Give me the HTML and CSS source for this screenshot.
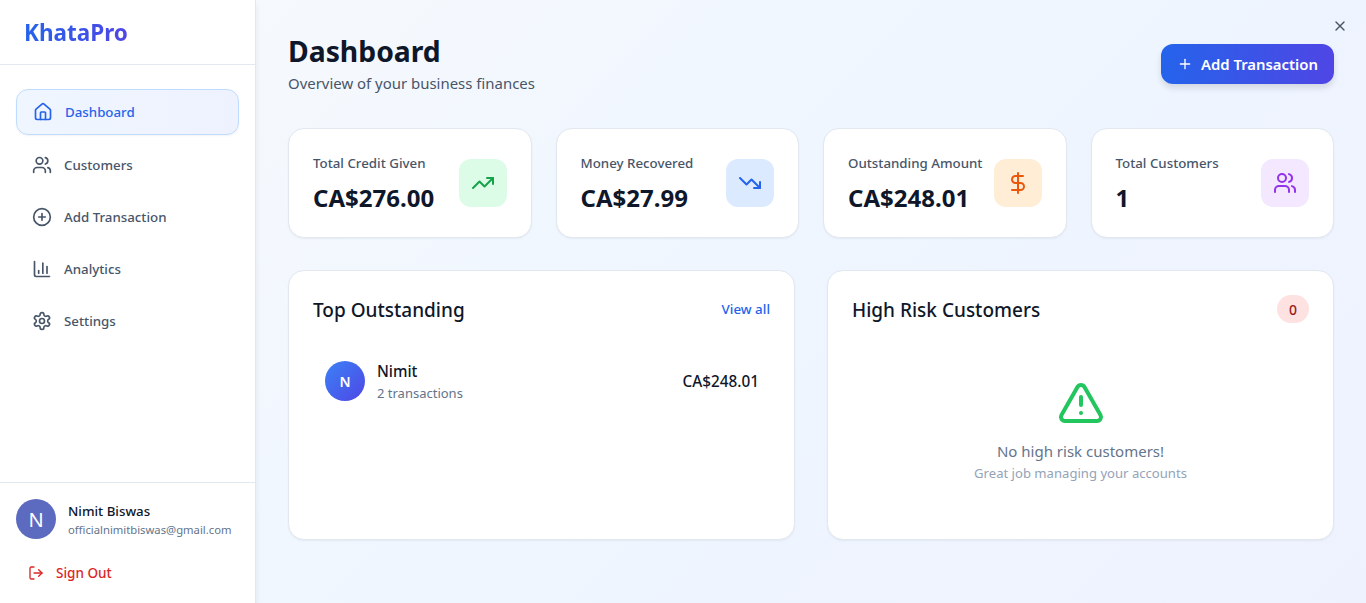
FILE: index.html
```html
<!DOCTYPE html>
<html lang="en">
<head>
  <meta charset="UTF-8">
  <meta name="viewport" content="width=device-width, initial-scale=1.0">
  <title>KhataPro</title>
  <link rel="stylesheet" href="styles.css">
</head>
<body>
  <aside class="sidebar">
    <div class="logo"><span class="logo-text">KhataPro</span></div>

    <nav class="nav">
      <a class="nav-item active">
        <svg class="icon" viewBox="0 0 24 24"><path d="M15 21v-8a1 1 0 0 0-1-1h-4a1 1 0 0 0-1 1v8"/><path d="M3 10a2 2 0 0 1 .709-1.528l7-5.999a2 2 0 0 1 2.582 0l7 5.999A2 2 0 0 1 21 10v9a2 2 0 0 1-2 2H5a2 2 0 0 1-2-2z"/></svg>
        <span>Dashboard</span>
      </a>
      <a class="nav-item">
        <svg class="icon" viewBox="0 0 24 24"><path d="M16 21v-2a4 4 0 0 0-4-4H6a4 4 0 0 0-4 4v2"/><circle cx="9" cy="7" r="4"/><path d="M22 21v-2a4 4 0 0 0-3-3.87"/><path d="M16 3.13a4 4 0 0 1 0 7.75"/></svg>
        <span>Customers</span>
      </a>
      <a class="nav-item">
        <svg class="icon" viewBox="0 0 24 24"><circle cx="12" cy="12" r="10"/><path d="M8 12h8"/><path d="M12 8v8"/></svg>
        <span>Add Transaction</span>
      </a>
      <a class="nav-item">
        <svg class="icon" viewBox="0 0 24 24"><path d="M3 3v16a2 2 0 0 0 2 2h16"/><path d="M18 17V9"/><path d="M13 17V5"/><path d="M8 17v-3"/></svg>
        <span>Analytics</span>
      </a>
      <a class="nav-item">
        <svg class="icon" viewBox="0 0 24 24"><path d="M12.22 2h-.44a2 2 0 0 0-2 2v.18a2 2 0 0 1-1 1.73l-.43.25a2 2 0 0 1-2 0l-.15-.08a2 2 0 0 0-2.73.73l-.22.38a2 2 0 0 0 .73 2.73l.15.1a2 2 0 0 1 1 1.72v.51a2 2 0 0 1-1 1.74l-.15.09a2 2 0 0 0-.73 2.73l.22.38a2 2 0 0 0 2.73.73l.15-.08a2 2 0 0 1 2 0l.43.25a2 2 0 0 1 1 1.73V20a2 2 0 0 0 2 2h.44a2 2 0 0 0 2-2v-.18a2 2 0 0 1 1-1.73l.43-.25a2 2 0 0 1 2 0l.15.08a2 2 0 0 0 2.73-.73l.22-.39a2 2 0 0 0-.73-2.73l-.15-.08a2 2 0 0 1-1-1.74v-.5a2 2 0 0 1 1-1.74l.15-.09a2 2 0 0 0 .73-2.73l-.22-.38a2 2 0 0 0-2.73-.73l-.15.08a2 2 0 0 1-2 0l-.43-.25a2 2 0 0 1-1-1.73V4a2 2 0 0 0-2-2z"/><circle cx="12" cy="12" r="3"/></svg>
        <span>Settings</span>
      </a>
    </nav>

    <div class="user-box">
      <div class="user">
        <div class="user-avatar">N</div>
        <div>
          <div class="user-name">Nimit Biswas</div>
          <div class="user-email">officialnimitbiswas@gmail.com</div>
        </div>
      </div>
      <a class="sign-out">
        <svg class="icon-sm" viewBox="0 0 24 24"><path d="M9 21H5a2 2 0 0 1-2-2V5a2 2 0 0 1 2-2h4"/><path d="m16 17 5-5-5-5"/><path d="M21 12H9"/></svg>
        Sign Out
      </a>
    </div>
  </aside>

  <main class="main">
    <svg class="close" viewBox="0 0 24 24"><path d="M18 6 6 18"/><path d="m6 6 12 12"/></svg>

    <header class="page-head">
      <div class="page-title">
        <h1>Dashboard</h1>
        <p>Overview of your business finances</p>
      </div>
      <button class="add-btn">
        <svg class="icon-sm" viewBox="0 0 24 24"><path d="M5 12h14"/><path d="M12 5v14"/></svg>
        Add Transaction
      </button>
    </header>

    <section class="stats">
      <div class="stat">
        <div>
          <div class="stat-label">Total Credit Given</div>
          <div class="stat-value">CA$276.00</div>
        </div>
        <div class="stat-icon green">
          <svg class="icon" viewBox="0 0 24 24"><path d="M22 7 13.5 15.5 8.5 10.5 2 17"/><path d="M16 7h6v6"/></svg>
        </div>
      </div>
      <div class="stat">
        <div>
          <div class="stat-label">Money Recovered</div>
          <div class="stat-value">CA$27.99</div>
        </div>
        <div class="stat-icon blue">
          <svg class="icon" viewBox="0 0 24 24"><path d="M22 17 13.5 8.5 8.5 13.5 2 7"/><path d="M16 17h6v-6"/></svg>
        </div>
      </div>
      <div class="stat">
        <div>
          <div class="stat-label">Outstanding Amount</div>
          <div class="stat-value">CA$248.01</div>
        </div>
        <div class="stat-icon orange">
          <svg class="icon" viewBox="0 0 24 24"><path d="M12 2v20"/><path d="M17 5H9.500a3.500 3.500 0 0 0 0 7h5a3.500 3.500 0 0 1 0 7H6"/></svg>
        </div>
      </div>
      <div class="stat">
        <div>
          <div class="stat-label">Total Customers</div>
          <div class="stat-value">1</div>
        </div>
        <div class="stat-icon purple">
          <svg class="icon" viewBox="0 0 24 24"><path d="M16 21v-2a4 4 0 0 0-4-4H6a4 4 0 0 0-4 4v2"/><circle cx="9" cy="7" r="4"/><path d="M22 21v-2a4 4 0 0 0-3-3.870"/><path d="M16 3.130a4 4 0 0 1 0 7.750"/></svg>
        </div>
      </div>
    </section>

    <section class="panels">
      <div class="panel">
        <div class="panel-head">
          <h2>Top Outstanding</h2>
          <a class="view-all">View all</a>
        </div>
        <div class="customer-row">
          <div class="customer-avatar">N</div>
          <div class="customer-info">
            <div class="customer-name">Nimit</div>
            <div class="customer-sub">2 transactions</div>
          </div>
          <div class="customer-amount">CA$248.01</div>
        </div>
      </div>

      <div class="panel">
        <div class="panel-head">
          <h2>High Risk Customers</h2>
          <span class="count-badge">0</span>
        </div>
        <div class="empty">
          <svg class="empty-icon" viewBox="0 0 24 24"><path d="m21.730 18-8-14a2 2 0 0 0-3.480 0l-8 14A2 2 0 0 0 4 21h16a2 2 0 0 0 1.730-3"/><path d="M12 9v4"/><path d="M12 17h.01"/></svg>
          <div class="empty-title">No high risk customers!</div>
          <div class="empty-sub">Great job managing your accounts</div>
        </div>
      </div>
    </section>
  </main>
</body>
</html>
```

FILE: styles.css
```css
* {
  box-sizing: border-box;
}
body {
  font-family: "Noto Sans", sans-serif;
  margin: 0;
  height: 603px;
  overflow: hidden;
  display: flex;
  color: #0f172a;
  background: linear-gradient(135deg, #f8fafc, #eff6ff 50%, #eef2ff);
}
svg {
  fill: none;
  stroke: currentColor;
  stroke-width: 2;
  stroke-linecap: round;
  stroke-linejoin: round;
}
.icon {
  width: 24px;
  height: 24px;
  flex-shrink: 0;
}
.icon-sm {
  width: 16px;
  height: 16px;
  flex-shrink: 0;
}

/* sidebar */
.sidebar {
  width: 256px;
  flex-shrink: 0;
  background: #fff;
  border-right: 1px solid #e2e8f0;
  box-shadow: 0 4px 6px rgba(0, 0, 0, 0.08);
  display: flex;
  flex-direction: column;
}
.logo {
  height: 65px;
  padding: 17px 24px 0;
  border-bottom: 1px solid #e2e8f0;
}
.logo-text {
  font-size: 22.5px;
  line-height: 32px;
  font-weight: 700;
  background: linear-gradient(90deg, #2563eb, #4f46e5);
  -webkit-background-clip: text;
  background-clip: text;
  color: transparent;
}
.nav {
  flex: 1;
  padding: 24px 16px;
  display: flex;
  flex-direction: column;
  gap: 8px;
}
.nav-item {
  display: flex;
  align-items: center;
  gap: 12px;
  height: 44px;
  padding: 0 16px;
  border-radius: 12px;
  font-size: 13.3px;
  font-weight: 500;
  color: #475569;
}
.nav-item.active {
  height: 46px;
  color: #2563eb;
  background: linear-gradient(90deg, #eff6ff, #eef2ff);
  border: 1px solid #bfdbfe;
  box-shadow: 0 1px 2px rgba(0, 0, 0, 0.05);
}
.nav-item .icon {
  width: 20px;
  height: 20px;
}
.user-box {
  border-top: 1px solid #e2e8f0;
  padding: 16px;
  height: 121px;
}
.user {
  display: flex;
  align-items: center;
  gap: 12px;
}
.user-avatar {
  width: 40px;
  height: 40px;
  flex-shrink: 0;
  border-radius: 50%;
  background: #5c6bc0;
  color: #fff;
  font-size: 20px;
  display: flex;
  align-items: center;
  justify-content: center;
}
.user-name {
  font-size: 13.3px;
  line-height: 20px;
  font-weight: 500;
}
.user-email {
  font-size: 11.25px;
  line-height: 16px;
  margin-top: 1px;
  color: #64748b;
}
.sign-out {
  display: flex;
  align-items: center;
  gap: 12px;
  margin-top: 17px;
  padding: 8px 12px;
  font-size: 13.5px;
  font-weight: 500;
  color: #dc2626;
}

/* main */
.main {
  flex: 1;
  position: relative;
  padding: 32px;
}
.close {
  position: absolute;
  top: 18px;
  right: 18px;
  width: 16px;
  height: 16px;
  color: #4b5563;
}
.page-head {
  display: flex;
  justify-content: space-between;
  align-items: flex-start;
  height: 64px;
  margin-bottom: 32px;
}
.page-title {
  padding-top: 1px;
}
h1 {
  margin: 0;
  font-size: 28.3px;
  line-height: 36px;
  font-weight: 700;
}
.page-title p {
  margin: 0;
  font-size: 14.95px;
  line-height: 28px;
  color: #475569;
}
.add-btn {
  display: flex;
  align-items: center;
  gap: 8px;
  height: 40px;
  margin-top: 12px;
  padding: 0 16px;
  border: none;
  border-radius: 12px;
  font-family: inherit;
  font-size: 14.9px;
  font-weight: 600;
  color: #fff;
  background: linear-gradient(90deg, #2563eb, #4f46e5);
  box-shadow: 0 4px 6px rgba(0, 0, 0, 0.12);
}
.stats {
  display: grid;
  grid-template-columns: repeat(4, 1fr);
  gap: 24px;
  margin-bottom: 32px;
}
.stat {
  height: 110px;
  background: #fff;
  border: 1px solid #e2e8f0;
  border-radius: 16px;
  box-shadow: 0 1px 2px rgba(0, 0, 0, 0.05);
  padding: 24px;
  display: flex;
  align-items: center;
  justify-content: space-between;
}
.stat-label {
  font-size: 13.3px;
  line-height: 20px;
  font-weight: 500;
  color: #475569;
  margin-bottom: 9px;
}
.stat-value {
  font-size: 24px;
  line-height: 32px;
  font-weight: 700;
}
.stat-icon {
  width: 48px;
  height: 48px;
  border-radius: 12px;
  display: flex;
  align-items: center;
  justify-content: center;
  flex-shrink: 0;
}
.green { background: #dcfce7; color: #16a34a; }
.blue { background: #dbeafe; color: #2563eb; }
.orange { background: #ffedd5; color: #ea580c; }
.purple { background: #f3e8ff; color: #9333ea; }

.panels {
  display: grid;
  grid-template-columns: repeat(2, 1fr);
  gap: 32px;
}
.panel {
  height: 270px;
  background: #fff;
  border: 1px solid #e2e8f0;
  border-radius: 16px;
  box-shadow: 0 1px 2px rgba(0, 0, 0, 0.05);
  padding: 24px;
}
.panel-head {
  display: flex;
  justify-content: space-between;
  align-items: center;
  height: 28px;
  margin-bottom: 24px;
}
h2 {
  margin: 0;
  padding-top: 2px;
  font-size: 19px;
  line-height: 28px;
  font-weight: 500;
}
.view-all {
  font-size: 13.4px;
  font-weight: 500;
  color: #2563eb;
  padding-bottom: 1px;
}
.count-badge {
  width: 32px;
  height: 28px;
  border-radius: 14px;
  background: #fee2e2;
  color: #991b1b;
  font-size: 14px;
  font-weight: 500;
  display: flex;
  align-items: center;
  justify-content: center;
}
.customer-row {
  display: flex;
  align-items: center;
  gap: 12px;
  padding: 12px;
}
.customer-avatar {
  width: 40px;
  height: 40px;
  flex-shrink: 0;
  border-radius: 50%;
  background: linear-gradient(135deg, #3b82f6, #4f46e5);
  color: #fff;
  font-size: 14px;
  font-weight: 600;
  display: flex;
  align-items: center;
  justify-content: center;
}
.customer-info {
  flex: 1;
}
.customer-name {
  font-size: 15.3px;
  line-height: 24px;
  font-weight: 500;
}
.customer-sub {
  font-size: 13px;
  line-height: 20px;
  color: #64748b;
}
.customer-amount {
  font-size: 15.3px;
  font-weight: 500;
  margin-right: -1px;
}
.empty {
  display: flex;
  flex-direction: column;
  align-items: center;
  padding-top: 32px;
}
.empty-icon {
  width: 48px;
  height: 48px;
  color: #22c55e;
  margin-bottom: 12px;
}
.empty-title {
  font-size: 15px;
  line-height: 24px;
  color: #64748b;
}
.empty-sub {
  font-size: 13.1px;
  line-height: 20px;
  color: #94a3b8;
}
```
